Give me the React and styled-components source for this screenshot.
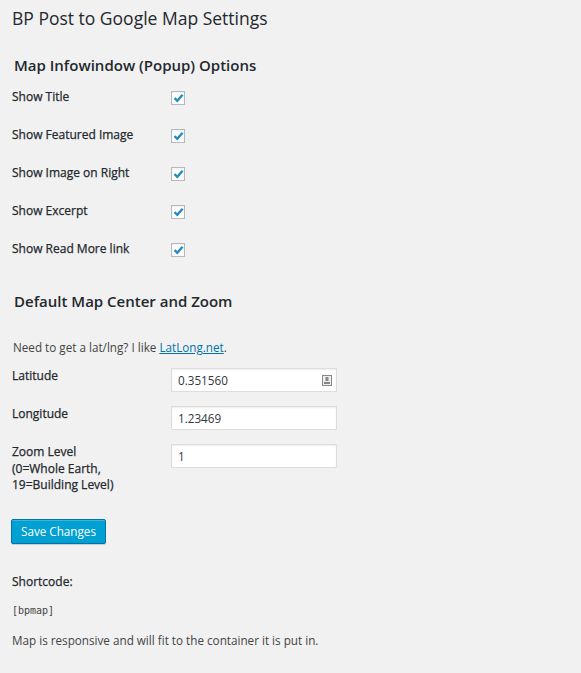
import React from "react";
import styled, { createGlobalStyle } from "styled-components";

const GlobalStyle = createGlobalStyle`
  html, body {
    margin: 0;
    padding: 0;
    background: #f1f1f1;
  }
  body {
    font-family: "Open Sans", "Liberation Sans", sans-serif;
    color: #444;
    font-size: 11.7px;
  }
`;

const Wrap = styled.div`
  display: flex;
  flex-direction: column;
  padding: 6px 12px 30px 12px;
  min-height: 673px;
  box-sizing: border-box;
`;

const PageTitle = styled.h1`
  margin: 0;
  font-size: 17.5px;
  line-height: 24px;
  font-weight: 400;
  color: #23282d;
`;

const SectionTitle = styled.h2`
  margin: ${(p) => p.$top}px 0 0 2px;
  font-size: 15px;
  line-height: 20px;
  font-weight: 600;
  color: #23282d;
`;

const FormTable = styled.div`
  display: flex;
  flex-direction: column;
  margin-top: ${(p) => p.$top}px;
`;

const Row = styled.div`
  display: grid;
  grid-template-columns: 159px 166px;
  align-items: start;
  min-height: 38px;
  padding-top: ${(p) => p.$pad}px;
  box-sizing: border-box;
`;

const Label = styled.div`
  font-size: 12px;
  line-height: 16.5px;
  font-weight: 500;
  color: #23282d;
  -webkit-text-stroke: 0.25px #23282d;
`;

const CheckBox = styled.span`
  display: flex;
  align-items: center;
  justify-content: center;
  width: 14px;
  height: 14px;
  box-sizing: border-box;
  margin-top: 2px;
  background: #fff;
  border: 1px solid #b4b9be;
  box-shadow: inset 0 1px 2px rgba(0, 0, 0, 0.07);
`;

const TextField = styled.div`
  display: flex;
  align-items: center;
  justify-content: space-between;
  height: 24px;
  box-sizing: border-box;
  padding: 0 4px 0 6px;
  background: #fff;
  border: 1px solid #ddd;
  box-shadow: inset 0 1px 2px rgba(0, 0, 0, 0.07);
  color: #32373c;
  font-size: 11.7px;
`;

const Intro = styled.p`
  margin: 28px 0 7px 1px;
  line-height: 16px;
  color: #444;

  a {
    color: #0073aa;
    text-decoration: underline;
  }
`;

const SaveButton = styled.button`
  align-self: flex-start;
  margin: 25px 0 0 -1px;
  width: 95px;
  height: 25px;
  padding: 0;
  font-family: "Open Sans", "Liberation Sans", sans-serif;
  font-size: 11.7px;
  color: #fff;
  background: #00a0d2;
  border: 1px solid #0073aa;
  border-radius: 2px;
  box-shadow: inset 0 1px 0 rgba(120, 200, 230, 0.5), 0 1px 0 rgba(0, 0, 0, 0.15);
  cursor: pointer;
`;

const Strong = styled.p`
  margin: 30px 0 0 0;
  line-height: 16px;
  font-size: 12px;
  font-weight: 500;
  color: #23282d;
  -webkit-text-stroke: 0.25px #23282d;
`;

const Code = styled.code`
  display: block;
  margin-top: 13px;
  line-height: 16px;
  font-family: "DejaVu Sans Mono", "Liberation Mono", monospace;
  font-size: 10px;
  color: #444;
`;

const Note = styled.p`
  margin: 13px 0 0 0;
  line-height: 16px;
  color: #444;
`;

function Check() {
  return (
    <CheckBox>
      <svg width="11" height="10" viewBox="0 0 11 10">
        <path d="M1.5 5.2 L4.3 7.8 L9.6 1.8" fill="none" stroke="#1e8cbe" strokeWidth="2.3" />
      </svg>
    </CheckBox>
  );
}

function AutofillIcon() {
  return (
    <svg width="10" height="11" viewBox="0 0 10 11">
      <rect x="0.5" y="0.5" width="9" height="10" fill="#eee" stroke="#888" />
      <rect x="3.5" y="2" width="3" height="4" fill="#888" />
      <rect x="2" y="7" width="6" height="2" fill="#888" />
    </svg>
  );
}

const checkRows = [
  "Show Title",
  "Show Featured Image",
  "Show Image on Right",
  "Show Excerpt",
  "Show Read More link",
];

const fieldRows = [
  { label: ["Latitude"], value: "0.351560", icon: true },
  { label: ["Longitude"], value: "1.23469" },
  { label: ["Zoom Level", "(0=Whole Earth,", "19=Building Level)"], value: "1" },
];

export default function App() {
  return (
    <>
      <GlobalStyle />
      <Wrap>
        <PageTitle>BP Post to Google Map Settings</PageTitle>

        <SectionTitle $top={25}>Map Infowindow (Popup) Options</SectionTitle>
        <FormTable $top={3}>
          {checkRows.map((label) => (
            <Row key={label} $pad={11}>
              <Label>{label}</Label>
              <Check />
            </Row>
          ))}
        </FormTable>

        <SectionTitle $top={23}>Default Map Center and Zoom</SectionTitle>
        <Intro>
          Need to get a lat/lng? I like <a href="#">LatLong.net</a>.
        </Intro>
        <FormTable $top={0}>
          {fieldRows.map((f) => (
            <Row key={f.value} $pad={6}>
              <Label>
                {f.label.map((l) => (
                  <div key={l}>{l}</div>
                ))}
              </Label>
              <TextField>
                <span>{f.value}</span>
                {f.icon && <AutofillIcon />}
              </TextField>
            </Row>
          ))}
        </FormTable>

        <SaveButton>Save Changes</SaveButton>

        <Strong>Shortcode:</Strong>
        <Code>[bpmap]</Code>
        <Note>Map is responsive and will fit to the container it is put in.</Note>
      </Wrap>
    </>
  );
}
